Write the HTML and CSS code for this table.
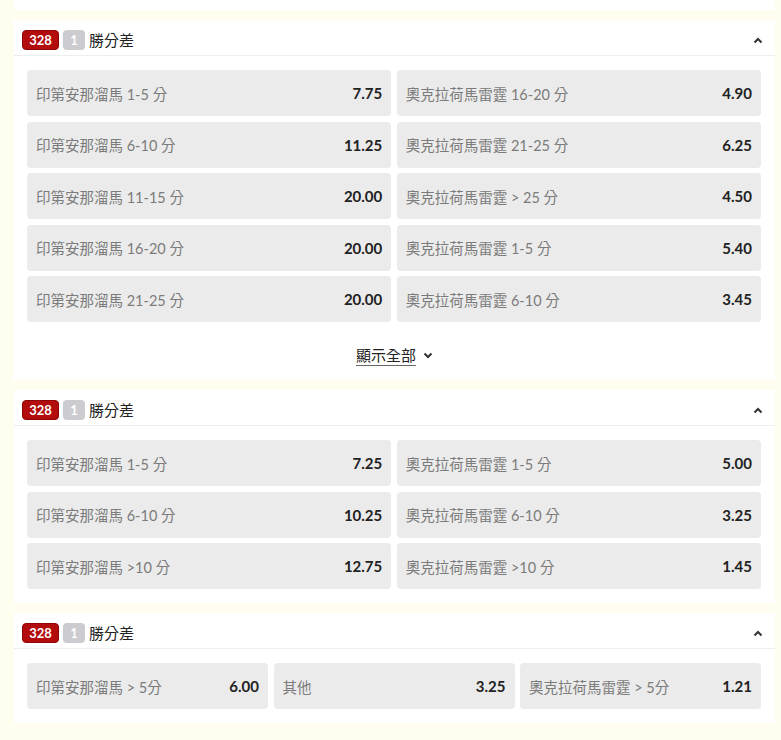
FILE: index.html
```html
<!DOCTYPE html>
<html lang="zh-Hant">
<head>
    <meta charset="UTF-8">
    <meta name="viewport" content="width=device-width, initial-scale=1.0">
    <title>勝分差</title>
    <link rel="stylesheet" href="styles.css">
</head>
<body>
    <div class="market-tail"></div>

    <!-- Market 1 -->
    <div class="market">
        <div class="market-head">
            <span class="badge badge-red">328</span>
            <span class="badge badge-gray">1</span>
            <span class="market-title">勝分差</span>
            <svg class="toggle" width="10" height="7" viewBox="0 0 10 7"><polyline points="1.5,5.5 5,2 8.5,5.5" fill="none" stroke="#333" stroke-width="2"/></svg>
        </div>
        <div class="odds-grid cols-2">
            <div class="odd"><span class="odd-label">印第安那溜馬 1-5 分</span><span class="odd-price">7.75</span></div>
            <div class="odd"><span class="odd-label">奧克拉荷馬雷霆 16-20 分</span><span class="odd-price">4.90</span></div>
            <div class="odd"><span class="odd-label">印第安那溜馬 6-10 分</span><span class="odd-price">11.25</span></div>
            <div class="odd"><span class="odd-label">奧克拉荷馬雷霆 21-25 分</span><span class="odd-price">6.25</span></div>
            <div class="odd"><span class="odd-label">印第安那溜馬 11-15 分</span><span class="odd-price">20.00</span></div>
            <div class="odd"><span class="odd-label">奧克拉荷馬雷霆 &gt; 25 分</span><span class="odd-price">4.50</span></div>
            <div class="odd"><span class="odd-label">印第安那溜馬 16-20 分</span><span class="odd-price">20.00</span></div>
            <div class="odd"><span class="odd-label">奧克拉荷馬雷霆 1-5 分</span><span class="odd-price">5.40</span></div>
            <div class="odd"><span class="odd-label">印第安那溜馬 21-25 分</span><span class="odd-price">20.00</span></div>
            <div class="odd"><span class="odd-label">奧克拉荷馬雷霆 6-10 分</span><span class="odd-price">3.45</span></div>
        </div>
        <div class="show-all">
            <span class="show-all-text">顯示全部</span>
            <svg class="show-all-icon" width="10" height="7" viewBox="0 0 10 7"><polyline points="1.5,1.5 5,5 8.5,1.5" fill="none" stroke="#333" stroke-width="2"/></svg>
        </div>
    </div>

    <!-- Market 2 -->
    <div class="market">
        <div class="market-head">
            <span class="badge badge-red">328</span>
            <span class="badge badge-gray">1</span>
            <span class="market-title">勝分差</span>
            <svg class="toggle" width="10" height="7" viewBox="0 0 10 7"><polyline points="1.5,5.5 5,2 8.5,5.5" fill="none" stroke="#333" stroke-width="2"/></svg>
        </div>
        <div class="odds-grid cols-2 pad-bottom">
            <div class="odd"><span class="odd-label">印第安那溜馬 1-5 分</span><span class="odd-price">7.25</span></div>
            <div class="odd"><span class="odd-label">奧克拉荷馬雷霆 1-5 分</span><span class="odd-price">5.00</span></div>
            <div class="odd"><span class="odd-label">印第安那溜馬 6-10 分</span><span class="odd-price">10.25</span></div>
            <div class="odd"><span class="odd-label">奧克拉荷馬雷霆 6-10 分</span><span class="odd-price">3.25</span></div>
            <div class="odd"><span class="odd-label">印第安那溜馬 &gt;10 分</span><span class="odd-price">12.75</span></div>
            <div class="odd"><span class="odd-label">奧克拉荷馬雷霆 &gt;10 分</span><span class="odd-price">1.45</span></div>
        </div>
    </div>

    <!-- Market 3 -->
    <div class="market">
        <div class="market-head">
            <span class="badge badge-red">328</span>
            <span class="badge badge-gray">1</span>
            <span class="market-title">勝分差</span>
            <svg class="toggle" width="10" height="7" viewBox="0 0 10 7"><polyline points="1.5,5.5 5,2 8.5,5.5" fill="none" stroke="#333" stroke-width="2"/></svg>
        </div>
        <div class="odds-grid cols-3 pad-bottom">
            <div class="odd"><span class="odd-label">印第安那溜馬 &gt; 5分</span><span class="odd-price">6.00</span></div>
            <div class="odd"><span class="odd-label">其他</span><span class="odd-price">3.25</span></div>
            <div class="odd"><span class="odd-label">奧克拉荷馬雷霆 &gt; 5分</span><span class="odd-price">1.21</span></div>
        </div>
    </div>
</body>
</html>
```

FILE: styles.css
```css
body {
    font-family: Lato, "Noto Sans CJK TC", sans-serif;
    margin: 0;
    padding: 0 6px 17px 14px;
    background-color: #fffcf0;
    color: #222;
}
.market-tail {
    height: 10px;
    background-color: white;
    margin-bottom: 10px;
}
.market {
    background-color: white;
    margin-bottom: 10px;
}
.market:last-child {
    margin-bottom: 0;
}
.market-head {
    display: flex;
    align-items: center;
    padding: 10px 12px 5px 8px;
    border-bottom: 1px solid #eeeeee;
}
.badge {
    display: inline-flex;
    align-items: center;
    justify-content: center;
    height: 20px;
    box-sizing: border-box;
    border-radius: 4px;
    color: white;
    font-size: 13px;
    font-weight: bold;
    margin-right: 4px;
}
.badge-red {
    width: 37px;
    background-color: #b30c0c;
    border: 1px solid #8e0505;
}
.badge-gray {
    width: 22px;
    background-color: #cbcbd0;
}
.market-title {
    font-size: 15px;
    color: #222;
    line-height: 20px;
}
.toggle {
    margin-left: auto;
}
.odds-grid {
    display: grid;
    gap: 5.5px;
    padding: 14px 14px 0 13px;
}
.cols-2 {
    grid-template-columns: 1fr 1fr;
}
.cols-3 {
    grid-template-columns: 1fr 1fr 1fr;
}
.pad-bottom {
    padding-bottom: 14px;
}
.odd {
    display: flex;
    align-items: center;
    justify-content: space-between;
    height: 46px;
    padding: 0 9px 0 9px;
    background-color: #ebebeb;
    border-radius: 4px;
}
.odd-label {
    font-size: 14.5px;
    color: #7b7b7b;
}
.odd-price {
    font-size: 15px;
    font-weight: bold;
    color: #222;
}
.show-all {
    display: flex;
    justify-content: center;
    align-items: center;
    padding: 23px 0 14px;
}
.show-all-text {
    font-size: 15px;
    line-height: 20px;
    color: #222;
    border-bottom: 1px solid #666;
}
.show-all-icon {
    margin-left: 7px;
}
```
